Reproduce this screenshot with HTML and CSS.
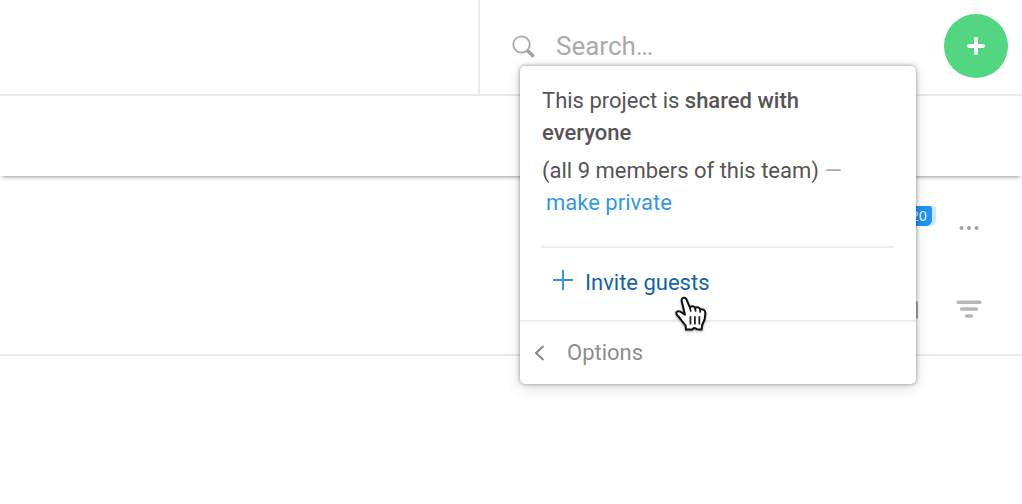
FILE: index.html
```
<!DOCTYPE html>
<html lang="en">
<head>
<meta charset="UTF-8">
<meta name="viewport" content="width=device-width,initial-scale=1.0">
<title>Project sharing</title>
<link rel="stylesheet" href="styles.css">
</head>
<body>

<header class="topbar">
  <div class="topbar-left"></div>
  <div class="topbar-right">
    <label class="search">
      <svg class="search-icon" viewBox="0 0 24 24" aria-hidden="true">
        <circle cx="9.500" cy="10.500" r="8.200" fill="none" stroke="#a9a9a9" stroke-width="1.800"/>
        <path d="M16 17l4.500 4.500" fill="none" stroke="#a0a0a0" stroke-width="3.600" stroke-linecap="round"/>
      </svg>
      <input type="search" placeholder="Search…" aria-label="Search">
    </label>
    <button class="add-btn" aria-label="Add">
      <svg viewBox="0 0 20 20" aria-hidden="true"><path d="M10 3v14M3 10h14" stroke="#fff" stroke-width="4" stroke-linecap="round"/></svg>
    </button>
  </div>
</header>

<nav class="subbar"></nav>

<main>
  <section class="project-head">
    <div class="row">
      <span class="count">20</span>
      <button class="icon-btn more" aria-label="More">
        <svg viewBox="0 0 26 26" fill="#a3a3a3" aria-hidden="true"><circle cx="5.500" cy="13" r="2"/><circle cx="13" cy="13" r="2"/><circle cx="20.500" cy="13" r="2"/></svg>
      </button>
    </div>
    <div class="row">
      <span class="view-toggle"></span>
      <button class="icon-btn" aria-label="Filter">
        <svg viewBox="0 0 26 26" stroke="#b7b7b7" stroke-width="3.600" stroke-linecap="round" aria-hidden="true"><path d="M2 6.200h22M5.500 13h15M10.700 20h4.600"/></svg>
      </button>
    </div>
  </section>
</main>

<!-- sharing popover -->
<aside class="popover">
  <div class="popover-body">
    <p>This project is <strong>shared with<br>everyone</strong></p>
    <p>(all 9 members of this team) <span class="dash">—</span><br><a class="private" href="#private">make private</a></p>
    <a class="invite" href="#invite">
      <svg viewBox="0 0 20 20" aria-hidden="true"><path d="M10 0v20M0 10h20" stroke="#3596dc" stroke-width="2"/></svg>
      Invite guests
    </a>
  </div>
  <button class="options">
    <svg viewBox="0 0 12 18" fill="none" aria-hidden="true"><path d="M10.500 2L3 9l7.500 7" stroke="#888" stroke-width="2"/></svg>
    Options
  </button>
  <svg class="pointer" viewBox="0 0 34 36" aria-hidden="true">
    <path d="M11.500 18.500L8.700 6.500C8 3.500 11.500 2 13 5l3 7.300c1-2 4-1.800 4.700.4 1.600-1.500 4-.7 4.600 1.300 2-1 4.300.4 4.500 2.500.4 4-.6 8-2.800 11.500l-.5 4-4-.3-2.500-1.200-2 1.500h-5.500l-.3-3.500c-2.500-2.500-4.500-6.500-7.200-9-2.500-2.500-.5-5 2.300-3.600z" fill="#fff" stroke="#111" stroke-width="1.800" stroke-linejoin="round"/>
    <path d="M16 12.300l.8 3M20.700 12.800l.5 2.500M25.300 14l-.1 2.200" fill="none" stroke="#111" stroke-width="1.500" stroke-linecap="round"/>
    <path d="M16.500 20v7.500M20.500 20v7.500M24.500 20v7.500" stroke="#222" stroke-width="1.600"/>
  </svg>
</aside>

</body>
</html>
```
FILE: styles.css
```
*,*::before,*::after{box-sizing:border-box;margin:0;padding:0}
body{
  position:relative;
  min-height:100vh;
  background:#fff;
  color:#555;
  font-family:Roboto,'Liberation Sans',sans-serif;
  font-size:22px;
  line-height:32px;
}
button,input{font:inherit;border:0;background:none}
button{cursor:pointer}
a{text-decoration:none}
svg{display:block}

/* === TOP BAR === */
.topbar{
  display:flex;
  height:96px;
  border-bottom:2px solid #e9e9e9;
}
.topbar-left{flex:1;border-right:2px solid #ebebeb}
.topbar-right{
  display:flex;
  align-items:center;
  width:542px;
  padding:0 14px 2px 32px;
}
.search{flex:1;display:flex;align-items:center;gap:20px}
.search-icon{width:24px;height:24px}
.search input{
  flex:1;
  min-width:0;
  font-size:26px;
  outline:0;
  color:#555;
}
.search input::placeholder{color:#aaa;opacity:1}
.add-btn{
  display:grid;
  place-items:center;
  width:64px;
  height:64px;
  border-radius:50%;
  background:#53d681;
}
.add-btn svg{width:20px;height:20px}

.subbar{
  height:80px;
  box-shadow:0 3px 4px -2px rgba(0,0,0,.4);
}

/* === PROJECT HEAD === */
.project-head{
  height:180px;
  padding:30px 40px 0 0;
  border-bottom:2px solid #ebebeb;
}
.row{
  display:flex;
  justify-content:flex-end;
  align-items:flex-start;
  height:80px;
}
.count{
  height:20px;
  padding:0 5px 0 16px;
  margin-right:24px;
  border-radius:3px 3px 6px 3px;
  background:#1e94f4;
  box-shadow:4px 0 0 #cbe6fd;
  color:#fff;
  font-family:Inter,sans-serif;
  font-size:13px;
  line-height:20px;
}
.view-toggle{
  width:20px;
  height:18px;
  margin:15px 38px 0 0;
  border-radius:2px;
  background:#a9a9a9;
}
.icon-btn{width:26px;height:26px;margin-top:10px}
/* keeps the dots level with the badge's lower edge */
.more{margin-top:9px}

/* === POPOVER === */
.popover{
  position:absolute;
  top:66px;
  right:106px;
  width:396px;
  border-radius:5px;
  background:#fff;
  box-shadow:0 0 4px rgba(0,0,0,.42),0 4px 16px rgba(0,0,0,.12);
}
.popover-body{padding:19px 22px 0}
.popover-body p{margin-bottom:6px}
.popover-body strong{font-weight:500}
.dash{color:#aaa}
.private{margin-left:4px;color:#3399e6}
.invite{
  display:flex;
  align-items:center;
  gap:12px;
  height:74px;
  margin-top:27px;
  padding:0 11px 2px;
  border-top:2px solid #ebebeb;
  color:#1264a8;
}
.invite svg{width:20px;height:20px;margin-bottom:6px}
.options{
  display:flex;
  align-items:center;
  gap:22px;
  width:100%;
  height:64px;
  padding:0 13px;
  border-top:2px solid #ebebeb;
  color:#8d8d8d;
}
.options svg{width:12px;height:18px}

.pointer{
  position:absolute;
  top:228px;
  left:152px;
  width:38px;
  height:40px;
  filter:drop-shadow(0 1px 1px rgba(0,0,0,.4));
}
```
